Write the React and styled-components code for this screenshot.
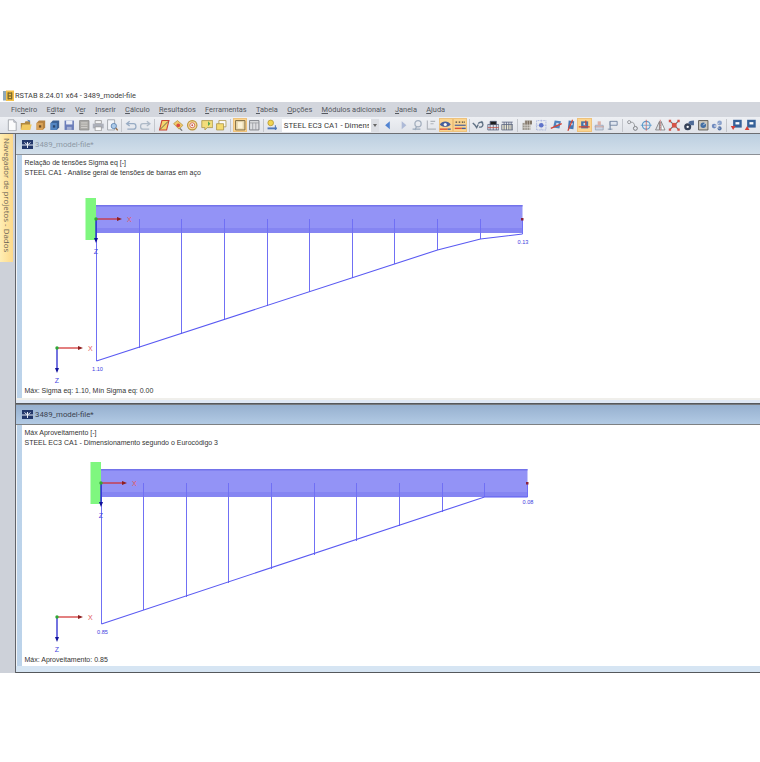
import React from 'react';
import styled, { createGlobalStyle } from 'styled-components';

const GlobalStyle = createGlobalStyle`
  html, body { margin: 0; padding: 0; background: #fff; }
  body { font-family: "Liberation Sans", Arial, sans-serif; overflow: hidden; }
`;

const Shell = styled.div`
  margin-top: 88px;
  height: 585px;
  width: 760px;
  display: flex;
  flex-direction: column;
  overflow: hidden;
`;

const TitleBar = styled.div`
  height: 14px;
  flex: none;
  display: flex;
  align-items: center;
  gap: 1px;
  padding-left: 3px;
  font-family: Roboto, sans-serif;
  font-size: 7.4px;
  color: #3c3c3c;
  background: #fff;
`;

const MenuBar = styled.div`
  height: 15px;
  flex: none;
  display: flex;
  align-items: center;
  gap: 9.3px;
  padding-left: 11px;
  background: #d3d6dd;
  font-family: Roboto, sans-serif;
  font-size: 7.4px;
  color: #55585f;
`;

const MenuItem = styled.span`
  white-space: nowrap;
  u { text-underline-offset: 1px; text-decoration-thickness: 0.5px; }
`;

const ToolBar = styled.div`
  height: 17px;
  flex: none;
  box-sizing: border-box;
  display: flex;
  align-items: center;
  padding-left: 5.3px;
  background: linear-gradient(#eef0f4, #e0e3e9);
  border-bottom: 1px solid #6c6e72;
  overflow: hidden;
`;

const ToolButton = styled.div`
  width: 14.3px;
  height: 14px;
  flex: none;
  display: flex;
  align-items: center;
  justify-content: center;
  box-sizing: border-box;
  background: ${p => (p.$active ? '#fbd590' : 'transparent')};
  box-shadow: ${p => (p.$active ? 'inset 0 0 0 1px #eec27c' : 'none')};
  svg { width: 12.5px; height: 12.5px; display: block; opacity: 0.88; }
`;

const ToolSep = styled.div`
  width: ${p => (p.$wide ? 6 : 4.3)}px;
  height: 13px;
  flex: none;
  display: flex;
  justify-content: center;
  &::before { content: ''; width: 1px; background: #c3c6cc; }
`;

const Combo = styled.div`
  width: 97px;
  height: 13px;
  margin: 0 2.5px 0 2px;
  flex: none;
  display: flex;
  background: #fff;
  font-family: Roboto, sans-serif;
  font-size: 7.8px;
  line-height: 13px;
  color: #3a3a3a;
`;

const ComboText = styled.div`
  width: 87px;
  padding-left: 2px;
  box-sizing: border-box;
  overflow: hidden;
  white-space: nowrap;
`;

const ComboArrow = styled.div`
  width: 8px;
  margin-left: auto;
  background: #dcdee3;
  display: flex;
  align-items: center;
  justify-content: center;
  &::before {
    content: '';
    border-left: 2.5px solid transparent;
    border-right: 2.5px solid transparent;
    border-top: 3px solid #666;
  }
`;

const Workspace = styled.div`
  flex: 1;
  min-height: 0;
  display: flex;
`;

const NavRail = styled.div`
  width: 15px;
  flex: none;
  background: #cdd1d9;
`;

const NavTab = styled.div`
  width: 13px;
  height: 128px;
  box-sizing: border-box;
  padding-top: 4px;
  background: linear-gradient(90deg, #ffeeb4, #fdd98a);
  writing-mode: vertical-rl;
  font-family: "Open Sans", sans-serif;
  font-size: 7.9px;
  line-height: 13px;
  color: #6d675a;
  white-space: nowrap;
`;

const MdiArea = styled.div`
  flex: 1;
  min-width: 0;
  display: flex;
  flex-direction: column;
  border-left: 1px solid #62646a;
`;

const ChildWindow = styled.section`
  height: ${p => p.$height}px;
  flex: none;
  display: flex;
  flex-direction: column;
`;

const ChildTitle = styled.div`
  height: 21px;
  flex: none;
  display: flex;
  align-items: center;
  gap: 2px;
  padding-left: 6px;
  box-sizing: border-box;
  border-top: ${p => (p.$active ? '1px solid #777a7e' : 'none')};
  border-bottom: 1px solid ${p => (p.$active ? '#7d8083' : '#8c9096')};
  background: ${p => (p.$active
    ? 'linear-gradient(#96b0cf, #b2cae4)'
    : 'linear-gradient(#bccfe0, #d2dfea)')};
  font-family: Roboto, sans-serif;
  font-size: 7.8px;
  color: ${p => (p.$active ? '#3a4250' : '#8d98a5')};
`;

const ChildFrame = styled.div`
  flex: 1;
  min-height: 0;
  display: flex;
  flex-direction: column;
  padding-left: 5px;
  background: linear-gradient(90deg, #bcd3ea, #d6e5f3);
  border-left: 1px solid #f2f3f5;
`;

const Viewport = styled.div`
  flex: 1;
  min-height: 0;
  display: flex;
  flex-direction: column;
  background: #fff;
  font-size: 7px;
  line-height: 9.5px;
  color: #333;
`;

const InfoHeader = styled.div`
  height: ${p => p.$height}px;
  flex: none;
  box-sizing: border-box;
  padding: 3px 0 0 2.5px;
`;

const InfoFooter = styled.div`
  flex: 1;
  padding: 2.5px 0 0 2.5px;
`;

const ChartSvg = styled.svg`
  width: 738px;
  height: 205px;
  flex: none;
  display: block;
  overflow: visible;
`;

const WindowDivider = styled.div`
  height: ${p => (p.$closing ? 7 : 6)}px;
  flex: none;
  box-sizing: border-box;
  border-bottom: 1px solid #55585c;
  background: ${p => (p.$closing
    ? '#d6e5f3'
    : 'linear-gradient(#f0efeb 40%, #dfe8f5 40%)')};
`;

const ICONS = {
  new: <><path d="M3 1h7l3 3v11H3z" fill="#fff" stroke="#8b8f96" /><path d="M10 1v3h3" fill="#dde" stroke="#8b8f96" /></>,
  open: <><path d="M1 5h5l1-2h6v10H1z" fill="#a77b2b" /><path d="M3 7h12l-2 7H1z" fill="#f3c64e" /><path d="M9 1l4 1-1 2z" fill="#3a6fb0" /></>,
  boxOrange: <><path d="M5 2h8v9l-3 3H2V5z" fill="#b0752a" /><path d="M2 5h8v9H2z" fill="#d99a45" /><path d="M5 8h3v3H5z" fill="#5c3a12" /></>,
  boxBlue: <><path d="M5 2h8v9l-3 3H2V5z" fill="#234f8a" /><path d="M2 5h8v9H2z" fill="#3f79bd" /><path d="M5 8h3v3H5z" fill="#12305c" /></>,
  save: <><path d="M2 2h12v12H2z" fill="#5a6fb3" /><path d="M4 2h8v5H4z" fill="#e8ecf6" /><path d="M5 10h6v4H5z" fill="#9aa7cf" /></>,
  book: <><path d="M2 2h12v12H2z" fill="#a3a19c" stroke="#7a7a78" /><path d="M4 5h8M4 8h8M4 11h8" stroke="#dddbd6" /></>,
  print: <><path d="M4 2h8v4H4z" fill="#f4f4f4" stroke="#888" /><path d="M1 6h14v6H1z" fill="#a5a9b3" /><path d="M4 10h8v5H4z" fill="#fff" stroke="#888" /></>,
  preview: <><path d="M2 1h9v13H2z" fill="#f4f6fa" stroke="#8b8f96" /><circle cx="10" cy="9" r="3.4" fill="#a7c7e8" stroke="#3f6ea5" /><path d="M12.5 11.5L15 14.5" stroke="#8a5a2b" strokeWidth="1.6" /></>,
  undo: <path d="M3 13h8c4 0 4-7 0-7H3M6 3L2 6l4 3" fill="none" stroke="#8ea4bf" strokeWidth="1.6" />,
  redo: <path d="M13 13H5c-4 0-4-7 0-7h8M10 3l4 3-4 3" fill="none" stroke="#a6b3c2" strokeWidth="1.6" />,
  para: <><path d="M5 2h9l-3 12H2z" fill="#f5d25c" stroke="#c6321d" strokeWidth="1.4" /><path d="M3 13L13 3" stroke="#333" /></>,
  tag: <><path d="M2 6l5-4 7 6-5 5z" fill="#f2c65a" stroke="#b08a2a" /><circle cx="8" cy="8" r="2.4" fill="#d8382a" /><path d="M10 12l3 3" stroke="#666" strokeWidth="1.5" /></>,
  target: <><circle cx="8" cy="8" r="6" fill="#f6d98a" stroke="#b98a28" strokeWidth="1.5" /><circle cx="8" cy="8" r="3.2" fill="#fff" stroke="#c8402c" /><circle cx="8" cy="8" r="1.2" fill="#c8402c" /></>,
  note: <><path d="M1 2h14v9H8l-3 3v-3H1z" fill="#f4dc6c" stroke="#a08730" /><path d="M9 3l3 3-3 3z" fill="#3c9a3c" /></>,
  folders: <><path d="M5 2h9v8H5z" fill="#fff" stroke="#a08730" /><path d="M2 6h9v8H2z" fill="#f7d95e" stroke="#a08730" /></>,
  panel: <><path d="M2 2h12v12H2z" fill="#e5d8b4" stroke="#6b5a36" strokeWidth="1.2" /><path d="M5 4h6v8H5z" fill="#fdf6e0" /></>,
  grid: <><path d="M2 2h12v12H2z" fill="#dcdde0" stroke="#6e7176" strokeWidth="1.2" /><path d="M2 5h12M6 5v9M10 5v9" stroke="#8a8d92" /></>,
  bulb: <><circle cx="6" cy="5" r="3.6" fill="#f4d13c" stroke="#a98c1d" /><path d="M2 12h12" stroke="#3b69b5" strokeWidth="2.4" /><path d="M12 8v6" stroke="#3b69b5" strokeWidth="1.4" /></>,
  arrowLeft: <path d="M10 3v10L4 8z" fill="#3e77cf" />,
  arrowRight: <path d="M6 3v10l6-5z" fill="#a6b4d4" />,
  probe: <><circle cx="9" cy="6" r="4" fill="none" stroke="#9aa7b8" strokeWidth="1.6" /><path d="M2 13h10M7 10L5 14" stroke="#8fa0b4" strokeWidth="1.5" /></>,
  axisXs: <path d="M3 2v11h11M7 3h6M7 6h4" fill="none" stroke="#a8adb4" strokeWidth="1.4" />,
  eye: <><path d="M1 7c3-5 11-5 14 0-3 4-11 4-14 0z" fill="#2f4f9c" /><circle cx="8" cy="7" r="2" fill="#fff" /><path d="M1 13h10" stroke="#d9402c" strokeWidth="1.8" /><path d="M11 13h4" stroke="#2f4f9c" strokeWidth="1.8" /></>,
  values: <><path d="M2 4h2M6 4h2M10 4h2M13 4h1" stroke="#333" strokeWidth="1.6" /><path d="M1 8h14" stroke="#2f4f9c" strokeWidth="1.5" /><path d="M1 12h9" stroke="#d9402c" strokeWidth="1.8" /><path d="M10 12h5" stroke="#2f4f9c" strokeWidth="1.8" /></>,
  hook: <path d="M1 5l3 3 2 3 2-4M8 6c2-3 6-2 6 1s-3 4-5 3M12 3l2 2" fill="none" stroke="#4f6378" strokeWidth="1.8" />,
  rack: <><path d="M1 7h14v7H1z" fill="#dde0ea" stroke="#44506e" /><path d="M4 7V3h8v4M4 7v7M8 7v7M12 7v7" stroke="#44506e" /><path d="M1 11h14" stroke="#c53a2a" /></>,
  rack2: <><path d="M1 7h14v7H1z" fill="#e8e3c9" stroke="#44506e" /><path d="M1 4h14M4 4v10M7 4v10M10 4v10M13 4v10" stroke="#44506e" /></>,
  mesh: <><path d="M2 5h10v9H2z" fill="#8f8a80" /><path d="M5 2h9v5H5z" fill="#6d5f4f" /><path d="M2 8h12M2 11h12M5 2v12M8 2v12M11 2v12" stroke="#e6e2da" strokeWidth=".7" /></>,
  dots: <><path d="M2 2h12v12H2z" fill="none" stroke="#7d8fd4" strokeDasharray="1 1" /><path d="M8 1v14M1 8h14" stroke="#9aa8dd" strokeDasharray="1 1" /><circle cx="8" cy="8" r="3" fill="#4d63c5" /></>,
  cubeRed: <><path d="M6 2l8 1-2 9-8-1z" fill="#3d76b6" /><path d="M8 5h3v3H8z" fill="#cfe0f2" /><path d="M1 12l14-6" stroke="#d1301f" strokeWidth="1.8" /></>,
  cubeBlue: <><path d="M6 2l7 1-1 10-7-1z" fill="#2f67ad" /><path d="M8 5h3v3H8z" fill="#cfe0f2" /><path d="M11 1L5 15" stroke="#d1301f" strokeWidth="1.6" /></>,
  cubeActive: <><path d="M4 3h9v9H4z" fill="#2f67ad" /><path d="M7 5h3v3H7z" fill="#cfe0f2" /><path d="M1 10h14M10 2v6" stroke="#d1301f" strokeWidth="1.6" /></>,
  stack: <><path d="M3 8h10v6H3z" fill="#c9d3e3" stroke="#8c9ab0" /><path d="M6 3h4v5H6z" fill="#d9a79c" /><path d="M2 10h12" stroke="#c98a7d" /></>,
  flag: <><path d="M4 14V3" stroke="#6b7f9c" strokeWidth="1.5" /><path d="M4 3h9v5H4z" fill="#dfe6f0" stroke="#51688a" /><path d="M1 13h6" stroke="#6b7f9c" /></>,
  chain: <><circle cx="4" cy="4" r="2" fill="none" stroke="#76797d" /><circle cx="12" cy="12" r="2.5" fill="none" stroke="#53565a" /><path d="M6 4c4 0 5 2 5 6" fill="none" stroke="#8a8d90" strokeWidth="1.2" /></>,
  split: <><circle cx="8" cy="8" r="5" fill="none" stroke="#4a90c6" strokeWidth="1.4" /><path d="M8 1v14" stroke="#c9504a" /><path d="M1 8h14" stroke="#4a90c6" /></>,
  mirror: <><path d="M7 3L2 14h5z" fill="#dde0e4" stroke="#666" /><path d="M9 3l5 11H9z" fill="#fff" stroke="#666" /><path d="M8 1v14" stroke="#c9504a" strokeDasharray="2 1" /></>,
  cross: <><path d="M2 2l12 12M14 2L2 14" stroke="#55585c" strokeWidth="1.3" /><path d="M5 5h6v6H5z" fill="#d34032" /><path d="M1 1h3v3H1zM12 1h3v3h-3zM1 12h3v3H1zM12 12h3v3h-3z" fill="#d34032" /></>,
  roll: <><circle cx="6" cy="10" r="4.5" fill="#1f2c44" /><circle cx="6" cy="10" r="1.5" fill="#fff" /><path d="M7 5c0-2 3-3 7-3v6h-4" fill="#3b5b8c" /></>,
  dial: <><path d="M2 2h12v12H2z" fill="#c9c4b7" stroke="#4d4a42" strokeWidth="1.2" /><circle cx="8" cy="8" r="3.5" fill="#2c5e9a" /><path d="M8 8l3-3" stroke="#fff" /></>,
  nodes: <><circle cx="4" cy="9" r="3" fill="#5f7eb8" /><circle cx="11" cy="5" r="3" fill="#7f98c7" /><circle cx="11" cy="12" r="2.6" fill="#44669f" /><path d="M4 9l7-4M4 9l7 3" stroke="#ced7e8" /></>,
  exportDown: <><path d="M4 1h11v10H4z" fill="#1e4f8e" /><path d="M7 4h5v3H7z" fill="#fff" /><path d="M1 9h6l-3 5z" fill="#d4281c" /></>,
  exportUp: <><path d="M4 1h11v10H4z" fill="#1e4f8e" /><path d="M7 4h5v3H7z" fill="#fff" /><path d="M4 9l3 5H1z" fill="#d4281c" /></>,
};

const TOOLS = [
  'new', 'open', 'boxOrange', 'boxBlue', 'save', 'book', 'print', 'preview', '|',
  'undo', 'redo', '|',
  'para', 'tag', 'target', 'note', 'folders', '|',
  'panel*', 'grid', '|',
  'bulb', 'combo', 'arrowLeft', 'arrowRight', 'probe', 'axisXs', 'eye*', 'values*', '|',
  'hook', 'rack', 'rack2', '||',
  'mesh', 'dots', 'cubeRed', 'cubeBlue', 'cubeActive*', 'stack', 'flag', '|',
  'chain', 'split', 'mirror', 'cross', 'roll', 'dial', 'nodes', '|',
  'exportDown', 'exportUp', 'exportDown',
];

const MENUS = [
  ['Fic', 'h', 'eiro'], ['E', 'd', 'itar'], ['V', 'e', 'r'], ['', 'I', 'nserir'],
  ['', 'C', 'álculo'], ['', 'R', 'esultados'], ['', 'F', 'erramentas'], ['', 'T', 'abela'],
  ['', 'O', 'pções'], ['', 'M', 'ódulos adicionais'], ['', 'J', 'anela'], ['', 'A', 'juda'],
];

const AppIcon = () => (
  <svg width="11" height="11" viewBox="0 0 11 11">
    <rect x="0" y="1" width="4" height="9.5" fill="#8fa9b8" />
    <rect x="3" y="0.5" width="8" height="10.5" fill="#f3c14a" />
    <rect x="5" y="2.5" width="4" height="1.3" fill="#7a6a2f" />
    <rect x="5" y="5.3" width="4" height="1.3" fill="#7a6a2f" />
    <rect x="5" y="8" width="4" height="1.3" fill="#7a6a2f" />
    <rect x="4.5" y="2.5" width="1.3" height="6.8" fill="#7a6a2f" />
    <rect x="8" y="2.5" width="1.3" height="6.8" fill="#7a6a2f" />
  </svg>
);

const WindowIcon = () => (
  <svg width="11" height="9" viewBox="0 0 11 9">
    <rect width="11" height="9" fill="#23386b" />
    <path d="M0 5h11M5.5 2v6M2.5 2.5l3 2.5 3-2.5" stroke="#e8edf5" fill="none" />
  </svg>
);

const AxisLabel = styled.text`
  font-family: "Liberation Sans", sans-serif;
  font-size: 7px;
`;

const ValueLabel = styled.text`
  font-family: "Liberation Sans", sans-serif;
  font-size: 5.6px;
  fill: #3d3de0;
`;

const Axes = ({ x, y, zLen = 25 }) => (
  <g>
    <line x1={x} y1={y} x2={x + 22} y2={y} stroke="#d02a2a" strokeWidth="1.2" />
    <path d={`M${x + 21} ${y - 2}L${x + 26} ${y}L${x + 21} ${y + 2}z`} fill="#8f1f1f" />
    <line x1={x} y1={y} x2={x} y2={y + zLen - 4} stroke="#1717cc" strokeWidth="1.2" />
    <path d={`M${x - 2} ${y + zLen - 5}L${x} ${y + zLen}L${x + 2} ${y + zLen - 5}z`} fill="#10109a" />
    <circle cx={x} cy={y} r="1.7" fill="#2eaa35" />
    <AxisLabel x={x + 31} y={y + 2.5} fill="#e2585c">X</AxisLabel>
    <AxisLabel x={x} y={y + 34.5} fill="#4646e0" textAnchor="middle">Z</AxisLabel>
  </g>
);

const BeamChart = ({ viewTop, beamTop, originX, ends, points, startLabel, endLabel, endLabelY, globalY }) => {
  const midY = beamTop + 14;
  const lastX = originX + 426.5;
  const line = points.map(p => p.join(',')).join(' ');
  return (
    <ChartSvg viewBox={`22 ${viewTop} 738 205`}>
      <rect x={originX} y={beamTop} width={lastX - originX} height={28} fill="#9393f6" />
      <rect x={originX} y={beamTop} width={lastX - originX} height={1.5} fill="#7373ea" />
      <rect x={originX} y={beamTop + 23} width={lastX - originX} height={5} fill="#8585f2" />
      <rect x={originX - 10.5} y={beamTop - 7} width={10.5} height={42} fill="#7ff77f" />
      {ends.map(([x, y]) => (
        <line key={x} x1={x} y1={midY} x2={x} y2={y} stroke="#7070f4" strokeWidth="1" />
      ))}
      <polyline points={line} fill="none" stroke="#5a5af2" strokeWidth="1.1" />
      <rect x={lastX - 1.5} y={midY - 1} width={2.5} height={2.5} fill="#8a1f3a" />
      <Axes x={originX} y={midY} zLen={24} />
      <Axes x={57} y={globalY} />
      <ValueLabel x={points[0][0] + 1} y={points[0][1] + 9.5} textAnchor="middle">{startLabel}</ValueLabel>
      <ValueLabel x={lastX + 0.5} y={endLabelY} textAnchor="middle">{endLabel}</ValueLabel>
    </ChartSvg>
  );
};

const FIRST_CHART = {
  viewTop: 178,
  beamTop: 205,
  originX: 96,
  globalY: 348,
  startLabel: '1.10',
  endLabel: '0.13',
  endLabelY: 244,
  ends: [[96.5, 361], [139.5, 348], [181.5, 334], [224.5, 320], [267.5, 306], [309.5, 292], [352.5, 278], [394.5, 264], [437.5, 250], [480.5, 239], [522.5, 234]],
  points: [[96.5, 361], [437.5, 250], [480.5, 239], [522.5, 234]],
};

const SECOND_CHART = {
  viewTop: 447,
  beamTop: 469,
  originX: 101,
  globalY: 617,
  startLabel: '0.85',
  endLabel: '0.08',
  endLabelY: 504,
  ends: [[101.5, 624], [143.5, 610], [186.5, 597], [228.5, 583], [271.5, 569], [314.5, 555], [356.5, 541], [399.5, 526], [442.5, 512], [484.5, 497], [527.5, 497]],
  points: [[101.5, 624], [484.5, 497], [527.5, 497]],
};

const App = () => (
  <>
    <GlobalStyle />
    <Shell>
      <TitleBar>
        <AppIcon />
        RSTAB 8.24.01 x64 - 3489_model-file
      </TitleBar>
      <MenuBar>
        {MENUS.map(([a, u, b]) => (
          <MenuItem key={a + u + b}>{a}<u>{u}</u>{b}</MenuItem>
        ))}
      </MenuBar>
      <ToolBar>
        {TOOLS.map((tool, i) => {
          if (tool === '|' || tool === '||') return <ToolSep key={i} $wide={tool === '||'} />;
          if (tool === 'combo') {
            return (
              <Combo key={i}>
                <ComboText>STEEL EC3 CA1 - Dimensionamento</ComboText>
                <ComboArrow />
              </Combo>
            );
          }
          const active = tool.endsWith('*');
          return (
            <ToolButton key={i} $active={active}>
              <svg viewBox="0 0 16 16">{ICONS[tool.replace('*', '')]}</svg>
            </ToolButton>
          );
        })}
      </ToolBar>
      <Workspace>
        <NavRail>
          <NavTab>Navegador de projetos - Dados</NavTab>
        </NavRail>
        <MdiArea>
          <ChildWindow $height={270}>
            <ChildTitle>
              <WindowIcon />
              3489_model-file*
            </ChildTitle>
            <ChildFrame>
              <Viewport>
                <InfoHeader $height={23}>
                  Relação de tensões Sigma eq [-]<br />
                  STEEL CA1 - Análise geral de tensões de barras em aço
                </InfoHeader>
                <BeamChart {...FIRST_CHART} />
                <InfoFooter>Máx: Sigma eq: 1.10, Mín Sigma eq: 0.00</InfoFooter>
              </Viewport>
            </ChildFrame>
            <WindowDivider />
          </ChildWindow>
          <ChildWindow $height={269}>
            <ChildTitle $active>
              <WindowIcon />
              3489_model-file*
            </ChildTitle>
            <ChildFrame>
              <Viewport>
                <InfoHeader $height={22}>
                  Máx Aproveitamento [-]<br />
                  STEEL EC3 CA1 - Dimensionamento segundo o Eurocódigo 3
                </InfoHeader>
                <BeamChart {...SECOND_CHART} />
                <InfoFooter>Máx: Aproveitamento: 0.85</InfoFooter>
              </Viewport>
            </ChildFrame>
            <WindowDivider $closing />
          </ChildWindow>
        </MdiArea>
      </Workspace>
    </Shell>
  </>
);

export default App;
